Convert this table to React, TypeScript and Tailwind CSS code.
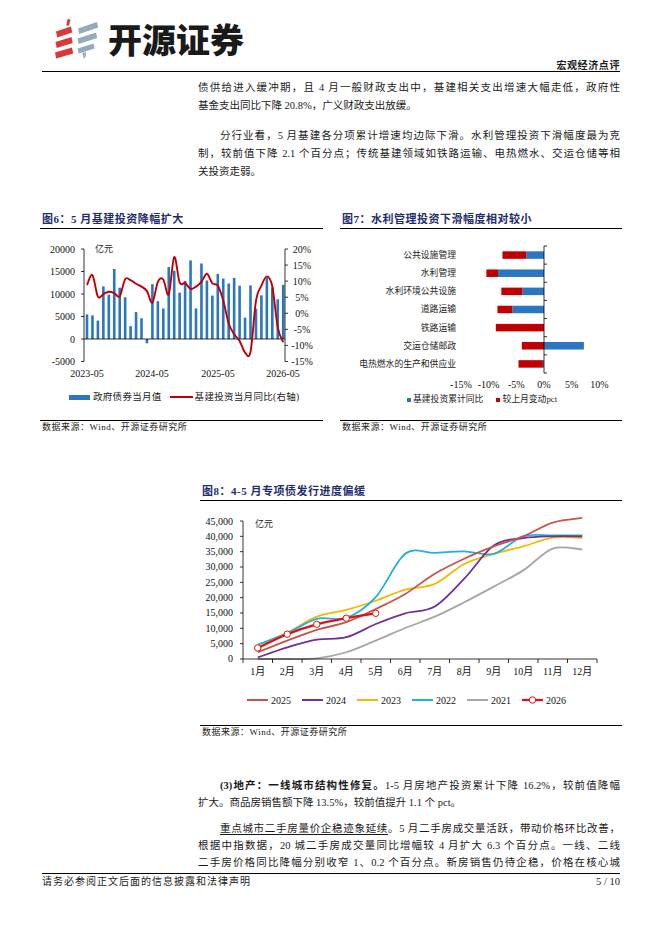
import React from "react";

type P = [number, number];

function smooth(pts: P[]): string {
  let d = `M${pts[0][0].toFixed(2)},${pts[0][1].toFixed(2)}`;
  for (let i = 0; i < pts.length - 1; i++) {
    const p0 = pts[i - 1] || pts[i];
    const p1 = pts[i];
    const p2 = pts[i + 1];
    const p3 = pts[i + 2] || p2;
    const c1x = p1[0] + (p2[0] - p0[0]) / 6;
    const c1y = p1[1] + (p2[1] - p0[1]) / 6;
    const c2x = p2[0] - (p3[0] - p1[0]) / 6;
    const c2y = p2[1] - (p3[1] - p1[1]) / 6;
    d += ` C${c1x.toFixed(2)},${c1y.toFixed(2)} ${c2x.toFixed(2)},${c2y.toFixed(2)} ${p2[0].toFixed(2)},${p2[1].toFixed(2)}`;
  }
  return d;
}

const SERIF = "'Liberation Serif', 'Noto Sans CJK SC', serif";

function Logo() {
  return (
    <svg width="44" height="41" viewBox="0 0 44 41" className="block">
      <polygon points="11.2,7.5 12.6,1 15.4,1.6 14.2,7.5" fill="#d8383a" />
      <polygon points="1,13.5 16,8.5 17.2,14.5 2.2,19.5" fill="#d8383a" />
      <polygon points="0.5,24 16.5,19 17.7,25 1.7,30" fill="#d8383a" />
      <polygon points="0,34.5 17,29.5 18.2,35.5 1.2,40.5" fill="#d8383a" />
      <polygon points="23,10.5 42,4 43.2,9.5 24.2,16" fill="#93abba" />
      <polygon points="22.5,20.5 41,14.5 42.2,20 23.7,26" fill="#93abba" />
      <polygon points="22.5,30.5 38.5,25.5 39.7,30.5 23.7,35.5" fill="#93abba" />
      <path d="M27,35 L30.8,34 L30.8,38 Q30.2,40 28.6,41 L28.2,37.5 Z" fill="#93abba" />
    </svg>
  );
}

const F6_BARS = [
  5470, 5250, 4090, 11680, 9850, 15550, 11390, 9270, 2850, 5990, 4600, -950, 12190, 8400, 6790, 15990,
  15180, 10290, 12920, 17450, 6790, 16790, 13000, 9640, 14450, 13430, 12340, 13580, 11830, 4750, 11900,
  6720, 9710, 13650, 11460, 8830, 12050,
];
const F6_LINE = [
  8.8, 11.9, 5.2, 6.0, 6.7, 6.3, 5.3, 10.6, 10.3, 9.2, 8.3, 6.9, 3.3, 9.8, 10.5, 5.9, 17.5, 9.6, 9.4, 7.6,
  8.3, 9.8, 12.3, 9.3, 8.6, 4.0, -3.2, -6.5, -8.6, -12.2, -12.0, 3.8, 8.6, 11.5, 8.4, -4.4, -9.0,
];

function Fig6Chart() {
  const x0 = 47;
  const dx = 5.45;
  const yZ = 109;
  const ys = 0.0045;
  const lineY = (v: number) => 83.3 - 3.214 * v;
  const pts = F6_LINE.map((v, i) => [x0 + dx * i, lineY(v)] as P);
  const leftLabels = ["20000", "15000", "10000", "5000", "0", "-5000"];
  const rightLabels = ["20%", "15%", "10%", "5%", "0%", "-5%", "-10%", "-15%"];
  const xLabels: [string, number][] = [
    ["2023-05", 47],
    ["2024-05", 112],
    ["2025-05", 178],
    ["2026-05", 243],
  ];
  return (
    <svg width="283" height="152" className="block mt-[1px]">
      {F6_BARS.map((v, i) => {
        const h = Math.abs(v) * ys;
        const y = v >= 0 ? yZ - h : yZ;
        return <rect key={i} x={x0 + dx * i - 1.3} y={y} width={2.6} height={h} fill="#2a76c0" />;
      })}
      <line x1={44} y1={yZ} x2={245} y2={yZ} stroke="#000" strokeWidth={0.8} />
      <path d={smooth(pts)} fill="none" stroke="#c00000" strokeWidth={1.9} />
      <line x1={44} y1={19} x2={44} y2={131.5} stroke="#000" strokeWidth={0.8} />
      <line x1={245} y1={19} x2={245} y2={131.5} stroke="#000" strokeWidth={0.8} />
      {leftLabels.map((t, k) => (
        <g key={t}>
          <line x1={41} y1={19 + k * 22.5} x2={44} y2={19 + k * 22.5} stroke="#000" strokeWidth={0.8} />
          <text x={35} y={19 + k * 22.5} textAnchor="end" dominantBaseline="central" fontSize="10" fontFamily={SERIF} fill="#111">
            {t}
          </text>
        </g>
      ))}
      {rightLabels.map((t, k) => (
        <g key={t}>
          <line x1={245} y1={19 + k * 16.07} x2={248} y2={19 + k * 16.07} stroke="#000" strokeWidth={0.8} />
          <text x={262} y={19 + k * 16.07} textAnchor="middle" dominantBaseline="central" fontSize="10" fontFamily={SERIF} fill="#111">
            {t}
          </text>
        </g>
      ))}
      {xLabels.map(([t, x]) => (
        <text key={t} x={x} y={143} textAnchor="middle" dominantBaseline="central" fontSize="10" fontFamily={SERIF} fill="#111">
          {t}
        </text>
      ))}
      <text x={55} y={19} dominantBaseline="central" fontSize="9" fontFamily={SERIF} fill="#222">
        亿元
      </text>
    </svg>
  );
}

const F7: [string, number, number][] = [
  ["公共设施管理", -3.2, -4.3],
  ["水利管理", -8.3, -2.1],
  ["水利环境公共设施", -3.9, -3.8],
  ["道路运输", -5.7, -2.7],
  ["铁路运输", 0, -8.7],
  ["交运仓储邮政", 7.2, -4.0],
  ["电热燃水的生产和供应业", -0.2, -4.4],
];

function Fig7Chart() {
  const zx = 204;
  const s = 5.54;
  const X = (p: number) => zx + s * p;
  const top = 16;
  const step = 18.14;
  const ticks = [-15, -10, -5, 0, 5, 10];
  return (
    <svg width="282" height="160" className="block mt-[1px]">
      {F7.map(([name, b, r], k) => {
        const cy = top + step * (k + 0.5);
        const bx = Math.min(X(0), X(b));
        const bw = Math.abs(b) * s;
        const rs = b < 0 ? b : 0;
        const re = rs + r;
        return (
          <g key={name}>
            {bw > 0 && <rect x={bx} y={cy - 3.75} width={bw} height={7.5} fill="#2a76c0" />}
            <rect x={X(re)} y={cy - 3.75} width={Math.abs(r) * s} height={7.5} fill="#c00000" />
            <text x={116} y={cy} textAnchor="end" dominantBaseline="central" fontSize="8.8" fontFamily={SERIF} fill="#222">
              {name}
            </text>
          </g>
        );
      })}
      <line x1={zx} y1={top} x2={zx} y2={top + step * 7} stroke="#000" strokeWidth={0.8} />
      {Array.from({ length: 8 }).map((_, k) => (
        <line key={k} x1={zx} y1={top + step * k} x2={zx + 3} y2={top + step * k} stroke="#000" strokeWidth={0.8} />
      ))}
      {ticks.map((t) => (
        <text key={t} x={X(t)} y={154} textAnchor="middle" dominantBaseline="central" fontSize="10" fontFamily={SERIF} fill="#111">
          {`${t}%`}
        </text>
      ))}
    </svg>
  );
}

const F8: { name: string; color: string; data: number[]; w: number }[] = [
  { name: "2021", color: "#a6a6a6", w: 1.8, data: [0, 0, 200, 2200, 6000, 10100, 13800, 18500, 23600, 28900, 36000, 35700] },
  { name: "2023", color: "#f5b800", w: 1.8, data: [4500, 8600, 13800, 16000, 19000, 22600, 24500, 31000, 34300, 36700, 39600, 39500] },
  { name: "2022", color: "#1fb1e3", w: 1.8, data: [4700, 8400, 13100, 13400, 20200, 34300, 34600, 35100, 34300, 40000, 40300, 40300] },
  { name: "2024", color: "#7030a0", w: 1.8, data: [500, 3800, 6300, 7100, 11400, 14900, 17100, 26200, 37000, 39400, 40000, 40000] },
  { name: "2025", color: "#c55450", w: 1.8, data: [2200, 6000, 9500, 12000, 16300, 21200, 27800, 32700, 36700, 40000, 44500, 46000] },
];
const F8_2026 = [3600, 8100, 11300, 13300, 14900];

function Fig8Chart() {
  const ax = 43;
  const yb = 158;
  const mw = 29.5;
  const sy = 138 / 45000;
  const X = (i: number) => ax + mw * (i + 0.5);
  const Y = (v: number) => yb - v * sy;
  const yl = ["45,000", "40,000", "35,000", "30,000", "25,000", "20,000", "15,000", "10,000", "5,000", "0"];
  const pts26 = F8_2026.map((v, i) => [X(i), Y(v)] as P);
  return (
    <svg width="422" height="182" className="block">
      {F8.map((s) => (
        <path key={s.name} d={smooth(s.data.map((v, i) => [X(i), Y(v)] as P))} fill="none" stroke={s.color} strokeWidth={s.w} />
      ))}
      <path d={smooth(pts26)} fill="none" stroke="#e01010" strokeWidth={2.2} />
      {pts26.map(([x, y], i) => (
        <circle key={i} cx={x} cy={y} r={3.2} fill="#fff" stroke="#e01010" strokeWidth={1} />
      ))}
      <line x1={ax} y1={20} x2={ax} y2={yb} stroke="#000" strokeWidth={0.8} />
      <line x1={ax} y1={yb} x2={ax + mw * 12} y2={yb} stroke="#000" strokeWidth={0.8} />
      {yl.map((t, k) => (
        <g key={t}>
          <line x1={ax - 3} y1={20 + k * 15.333} x2={ax} y2={20 + k * 15.333} stroke="#000" strokeWidth={0.8} />
          <text x={33} y={20 + k * 15.333} textAnchor="end" dominantBaseline="central" fontSize="10" fontFamily={SERIF} fill="#111">
            {t}
          </text>
        </g>
      ))}
      {Array.from({ length: 13 }).map((_, k) => (
        <line key={k} x1={ax + mw * k} y1={yb} x2={ax + mw * k} y2={yb + 4} stroke="#000" strokeWidth={0.8} />
      ))}
      {Array.from({ length: 12 }).map((_, i) => (
        <text key={i} x={X(i)} y={170} textAnchor="middle" dominantBaseline="central" fontSize="10" fontFamily={SERIF} fill="#111">
          {`${i + 1}月`}
        </text>
      ))}
      <text x={55} y={23} dominantBaseline="central" fontSize="9" fontFamily={SERIF} fill="#222">
        亿元
      </text>
    </svg>
  );
}

function Source() {
  return <div className="pl-[2px] text-[9px] leading-[12px] tracking-[0.5px] text-[#222]">数据来源：Wind、开源证券研究所</div>;
}

export default function App() {
  return (
    <div className="w-[662px] h-[936px] overflow-hidden bg-white text-[#1a1a1a] font-['Liberation_Serif','Noto_Sans_CJK_SC',serif]">
      {/* header */}
      <div className="mx-[42px] h-[72px] border-b-[1.5px] border-black flex justify-between">
        <div className="flex items-start pt-[18px] pl-[13px]">
          <Logo />
          <span className="ml-[9px] text-[34px] leading-[41px] font-black font-['Noto_Sans_CJK_SC',sans-serif] text-[#1a1a1a]">
            开源证券
          </span>
        </div>
        <div className="self-end text-[10px] leading-[12px] font-bold tracking-[0.6px] font-['Noto_Sans_CJK_SC',sans-serif]">
          宏观经济点评
        </div>
      </div>

      {/* top text */}
      <div className="ml-[198px] mr-[42px] pt-[7px] text-[10.5px] leading-[18px]">
        <div>
          <div className="text-justify [text-align-last:justify]">债供给进入缓冲期，且 4 月一般财政支出中，基建相关支出增速大幅走低，政府性</div>
          <div>基金支出同比下降 20.8%，广义财政支出放缓。</div>
        </div>
        <div className="mt-[12px]">
          <div className="pl-[22px] text-justify [text-align-last:justify]">分行业看，5 月基建各分项累计增速均边际下滑。水利管理投资下滑幅度最为克</div>
          <div className="text-justify [text-align-last:justify]">制，较前值下降 2.1 个百分点；传统基建领域如铁路运输、电热燃水、交运仓储等相</div>
          <div>关投资走弱。</div>
        </div>
      </div>

      {/* figures 6 & 7 */}
      <div className="mx-[40px] mt-[31px] flex justify-between">
        <div className="w-[283px]">
          <div className="h-[17px] border-b border-black pl-[2px] text-[11px] leading-[14px] font-bold tracking-[0.5px] text-[#1f2d6e]">
            图6：5 月基建投资降幅扩大
          </div>
          <Fig6Chart />
          <div className="mt-[8px] h-[14px] flex items-center text-[9.5px] tracking-[0.3px] text-[#222]">
            <span className="ml-[29px] w-[21px] h-[5px] bg-[#2a76c0]" />
            <span className="ml-[3px]">政府债券当月值</span>
            <span className="ml-[8px] w-[23px] h-[2px] bg-[#c00000]" />
            <span className="ml-[2px]">基建投资当月同比(右轴)</span>
          </div>
          <div className="mt-[16px] border-t border-black">
            <Source />
          </div>
        </div>
        <div className="w-[282px]">
          <div className="h-[17px] border-b border-black pl-[2px] text-[11px] leading-[14px] font-bold tracking-[0.5px] text-[#1f2d6e]">
            图7：水利管理投资下滑幅度相对较小
          </div>
          <Fig7Chart />
          <div className="mt-[3px] h-[14px] flex items-center text-[8.8px] text-[#222]">
            <span className="ml-[67px] w-[4px] h-[4px] bg-[#2a76c0]" />
            <span className="ml-[2px]">基建投资累计同比</span>
            <span className="ml-[13px] w-[4px] h-[4px] bg-[#c00000]" />
            <span className="ml-[2px]">较上月变动pct</span>
          </div>
          <div className="mt-[13px] border-t border-black">
            <Source />
          </div>
        </div>
      </div>

      {/* figure 8 */}
      <div className="ml-[200px] mr-[40px] mt-[51px]">
        <div className="h-[17px] border-b border-black pl-[2px] text-[11px] leading-[14px] font-bold tracking-[0.5px] text-[#1f2d6e]">
          图8：4-5 月专项债发行进度偏缓
        </div>
        <Fig8Chart />
        <div className="mt-[10px] h-[14px] flex items-center pl-[47px] text-[10px] text-[#111]">
          <div className="w-[55px] flex items-center">
            <span className="w-[21px] h-[2px] bg-[#c55450]" />
            <span className="ml-[3px]">2025</span>
          </div>
          <div className="w-[55px] flex items-center">
            <span className="w-[21px] h-[2px] bg-[#7030a0]" />
            <span className="ml-[3px]">2024</span>
          </div>
          <div className="w-[55px] flex items-center">
            <span className="w-[21px] h-[2px] bg-[#f5b800]" />
            <span className="ml-[3px]">2023</span>
          </div>
          <div className="w-[55px] flex items-center">
            <span className="w-[21px] h-[2px] bg-[#1fb1e3]" />
            <span className="ml-[3px]">2022</span>
          </div>
          <div className="w-[55px] flex items-center">
            <span className="w-[21px] h-[2px] bg-[#a6a6a6]" />
            <span className="ml-[3px]">2021</span>
          </div>
          <div className="w-[55px] flex items-center">
            <svg width="21" height="8" className="block">
              <line x1="0" y1="4" x2="21" y2="4" stroke="#e01010" strokeWidth="2.2" />
              <circle cx="10.5" cy="4" r="3.2" fill="#fff" stroke="#e01010" strokeWidth="1" />
            </svg>
            <span className="ml-[3px]">2026</span>
          </div>
        </div>
        <div className="mt-[18px] border-t border-black">
          <Source />
        </div>
      </div>

      {/* bottom text */}
      <div className="ml-[198px] mr-[42px] mt-[39px] text-[10.5px] leading-[17px]">
        <div>
          <div className="pl-[22px] text-justify [text-align-last:justify]">
            <span className="font-bold">(3)地产：一线城市结构性修复。</span>1-5 月房地产投资累计下降 16.2%，较前值降幅
          </div>
          <div>扩大。商品房销售额下降 13.5%，较前值提升 1.1 个 pct。</div>
        </div>
        <div className="mt-[9px]">
          <div className="pl-[22px] text-justify [text-align-last:justify]">
            <span className="underline underline-offset-[2px]">重点城市二手房量价企稳迹象延续</span>。5 月二手房成交量活跃，带动价格环比改善，
          </div>
          <div className="text-justify [text-align-last:justify]">根据中指数据，20 城二手房成交量同比增幅较 4 月扩大 6.3 个百分点。一线、二线</div>
          <div className="text-justify [text-align-last:justify]">二手房价格同比降幅分别收窄 1、0.2 个百分点。新房销售仍待企稳，价格在核心城</div>
        </div>
      </div>

      {/* footer */}
      <div className="mx-[42px] mt-[2px] border-t-[1.5px] border-black pt-[2px] flex justify-between text-[10px] leading-[12px]">
        <span className="tracking-[1px]">请务必参阅正文后面的信息披露和法律声明</span>
        <span className="text-[10.5px]">5 / 10</span>
      </div>
    </div>
  );
}
